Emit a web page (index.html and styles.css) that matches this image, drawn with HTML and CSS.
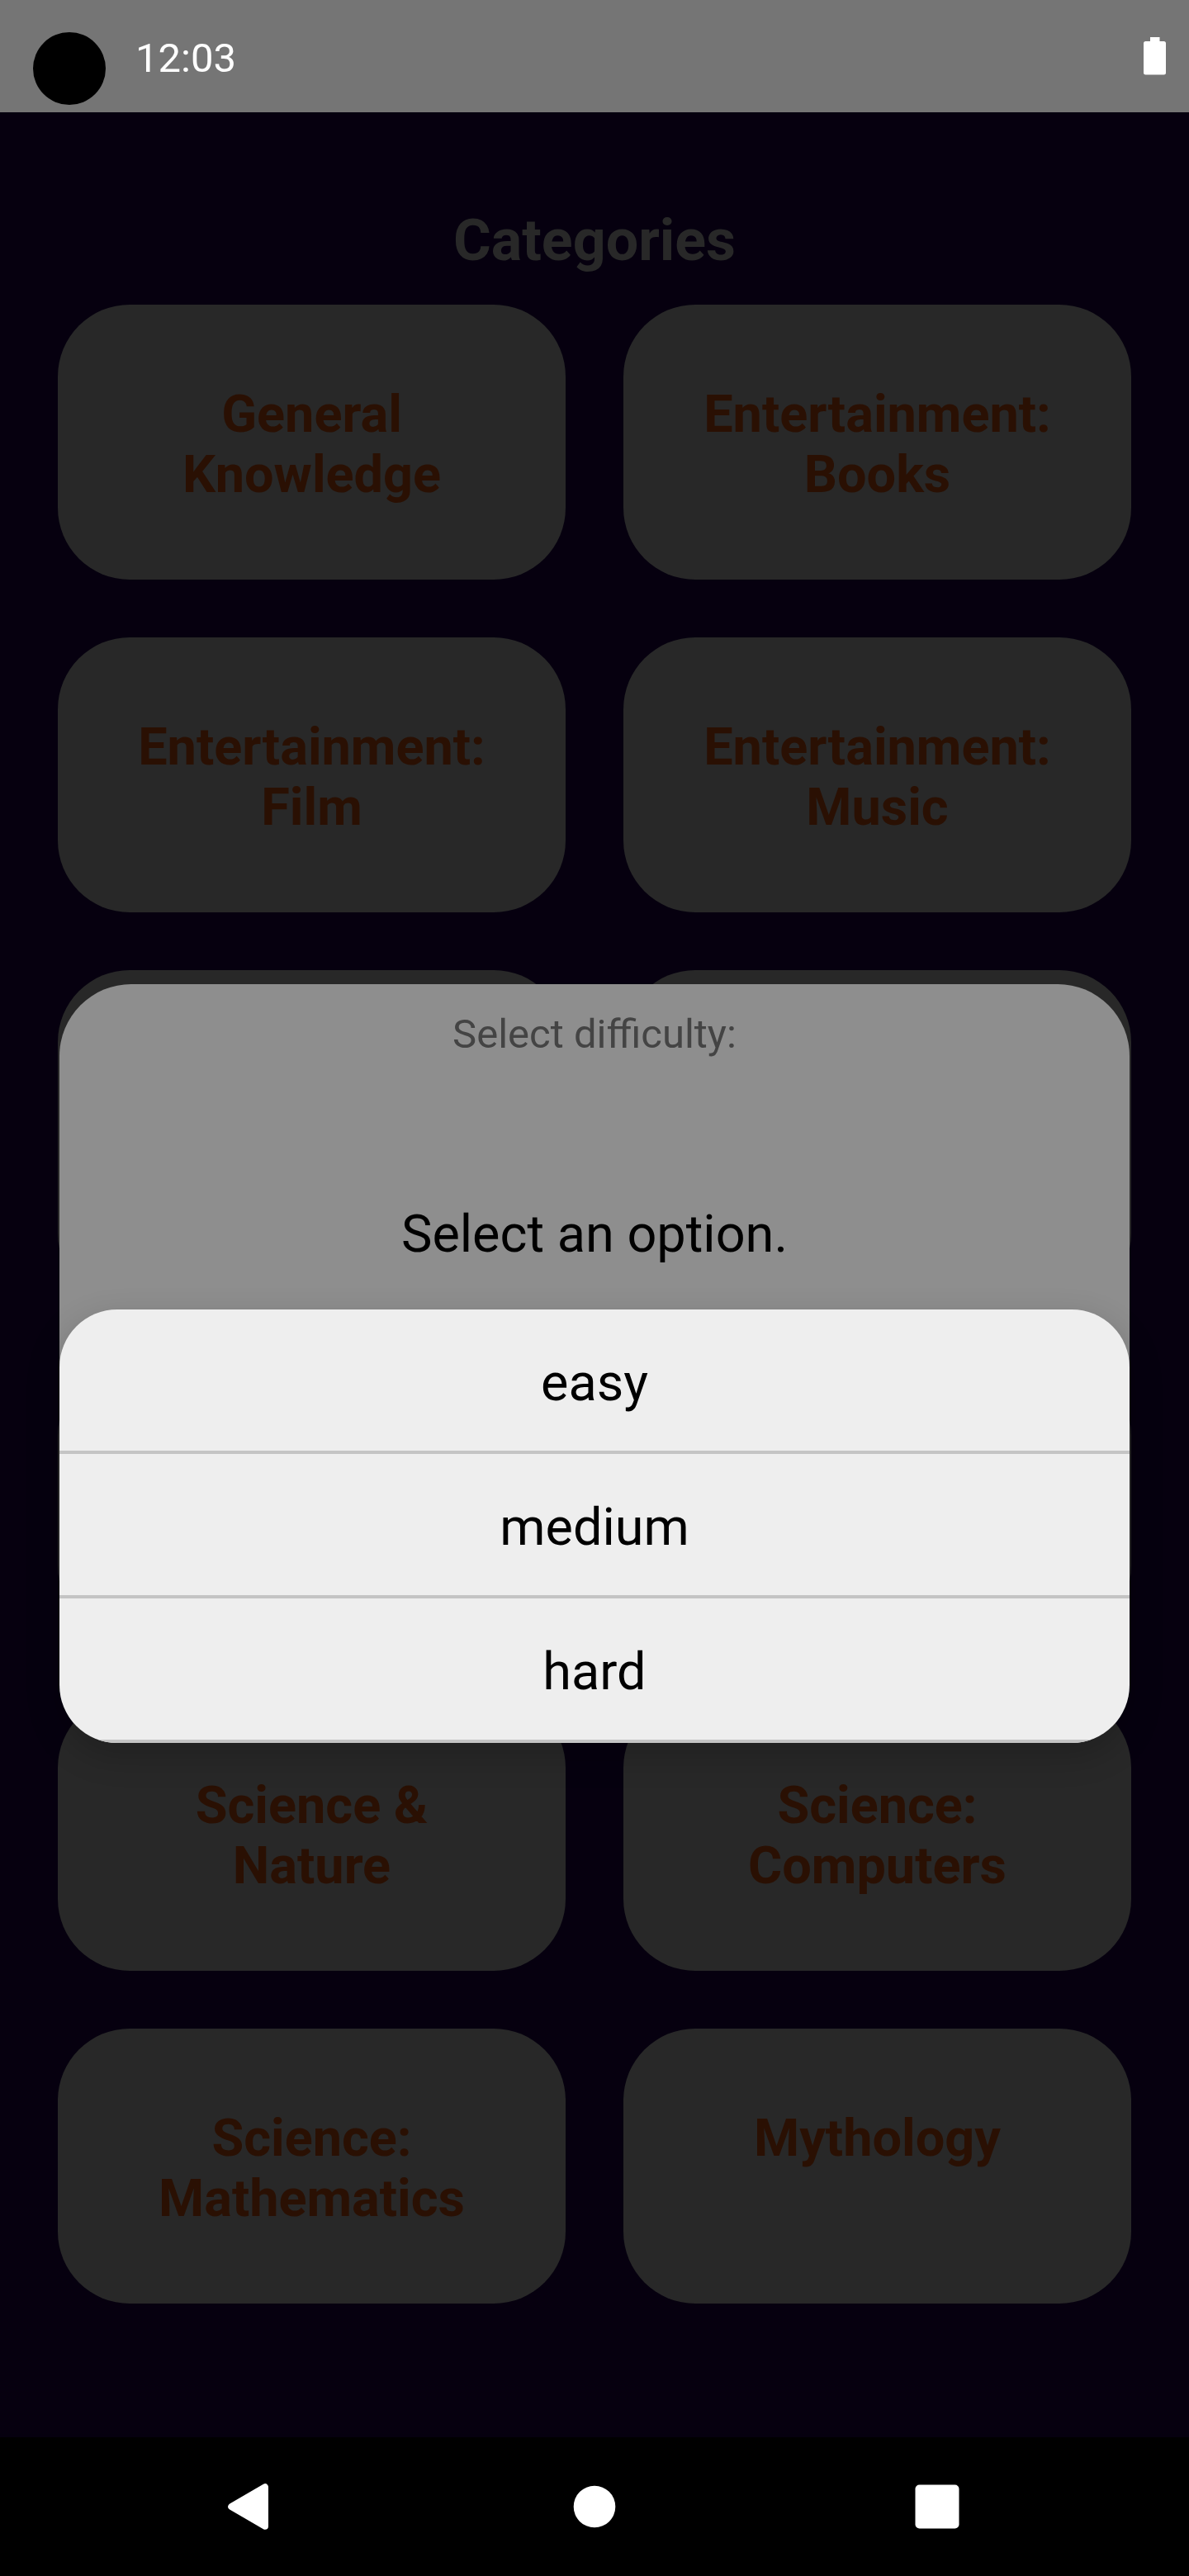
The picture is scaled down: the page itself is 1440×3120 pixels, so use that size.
FILE: index.html
```html
<!DOCTYPE html>
<html lang="en">
<head>
<meta charset="utf-8">
<title>Categories</title>
<link rel="stylesheet" href="styles.css">
</head>
<body>
<div class="screen">
  <header class="status-bar">
    <span class="camera"></span>
    <span class="clock">12:03</span>
    <svg class="battery" width="27" height="46" viewBox="0 0 27 46"><path d="M8 0H19.500V5H24.500Q27 5 27 7.500V43Q27 45.500 24.500 45.500H2.500Q0 45.500 0 43V7.500Q0 5 2.500 5H8Z" fill="#fff"/></svg>
  </header>
  <main class="content">
    <h1 class="title">Categories</h1>
    <div class="grid">
      <div class="card">General<br>Knowledge</div>
      <div class="card">Entertainment:<br>Books</div>
      <div class="card">Entertainment:<br>Film</div>
      <div class="card">Entertainment:<br>Music</div>
      <div class="card card-tall"></div>
      <div class="card card-tall"></div>
      <div class="card"></div>
      <div class="card"></div>
      <div class="card">Science &amp;<br>Nature</div>
      <div class="card">Science:<br>Computers</div>
      <div class="card">Science:<br>Mathematics</div>
      <div class="card">Mythology</div>
    </div>
  </main>
  <nav class="nav-bar">
    <svg width="56" height="56" viewBox="0 0 56 56"><path d="M4.200 28L45 4.200V51.800Z" fill="#fff" stroke="#fff" stroke-width="8" stroke-linejoin="round"/></svg>
    <svg width="52" height="52" viewBox="0 0 52 52"><circle cx="26" cy="26" r="25.300" fill="#fff"/></svg>
    <svg width="54" height="54" viewBox="0 0 54 54"><rect x=".5" y=".5" width="53" height="53" rx="5" fill="#fff"/></svg>
  </nav>
  <section class="dialog">
    <p class="dialog-label">Select difficulty:</p>
    <p class="dialog-value">Select an option.</p>
  </section>
  <div class="menu">
    <div class="option">easy</div>
    <div class="option">medium</div>
    <div class="option">hard</div>
  </div>
</div>
</body>
</html>
```
FILE: styles.css
```css
* { box-sizing: border-box; }
body { margin: 0; font-family: Roboto, sans-serif; }
.screen {
  position: relative;
  display: flex;
  flex-direction: column;
  width: 1440px;
  height: 3120px;
  overflow: hidden;
  background: #06000f;
}
.status-bar {
  display: flex;
  height: 136px;
  padding: 0 28px 0 40px;
  background: #757575;
}
.camera { width: 88px; height: 88px; margin-top: 39px; border-radius: 50%; background: #000; }
.clock { margin: 42px auto 0 36px; font-size: 49px; line-height: 57px; color: #fff; }
.battery { margin-top: 45px; }
.content { flex: 1; padding: 114px 70px 0; }
.title {
  margin: 0 0 37px;
  font-size: 70px;
  font-weight: 700;
  line-height: 82px;
  text-align: center;
  color: #282828;
}
.grid { display: grid; grid-template-columns: 1fr 1fr; gap: 70px; }
.card {
  height: 333px;
  padding-top: 96px;
  border-radius: 87px;
  background: #282828;
  color: #2a1003;
  font-size: 63px;
  font-weight: 700;
  line-height: 73px;
  text-align: center;
}
.card-tall { height: 406px; }
.nav-bar {
  display: flex;
  align-items: center;
  justify-content: space-between;
  height: 168px;
  padding: 0 278px 0 276px;
  background: #000;
}
.dialog {
  position: absolute;
  top: 1192px;
  left: 72px;
  width: 1296px;
  height: 700px;
  border-radius: 87px;
  background: #8e8e8e;
  text-align: center;
}
.dialog-label { margin: 32px 0 0; font-size: 49px; line-height: 57px; color: #444; }
.dialog-value { margin: 176px 0 0; font-size: 63px; line-height: 75px; color: #000; }
.menu {
  position: absolute;
  top: 1586px;
  left: 72px;
  width: 1296px;
  height: 525px;
  overflow: hidden;
  border-radius: 70px;
  background: #eee;
  box-shadow: 0 14px 42px rgba(0, 0, 0, .2);
}
.option {
  height: 175px;
  border-bottom: 4px solid #c4c4c4;
  font-size: 63px;
  line-height: 177px;
  text-align: center;
  color: #000;
}
```
